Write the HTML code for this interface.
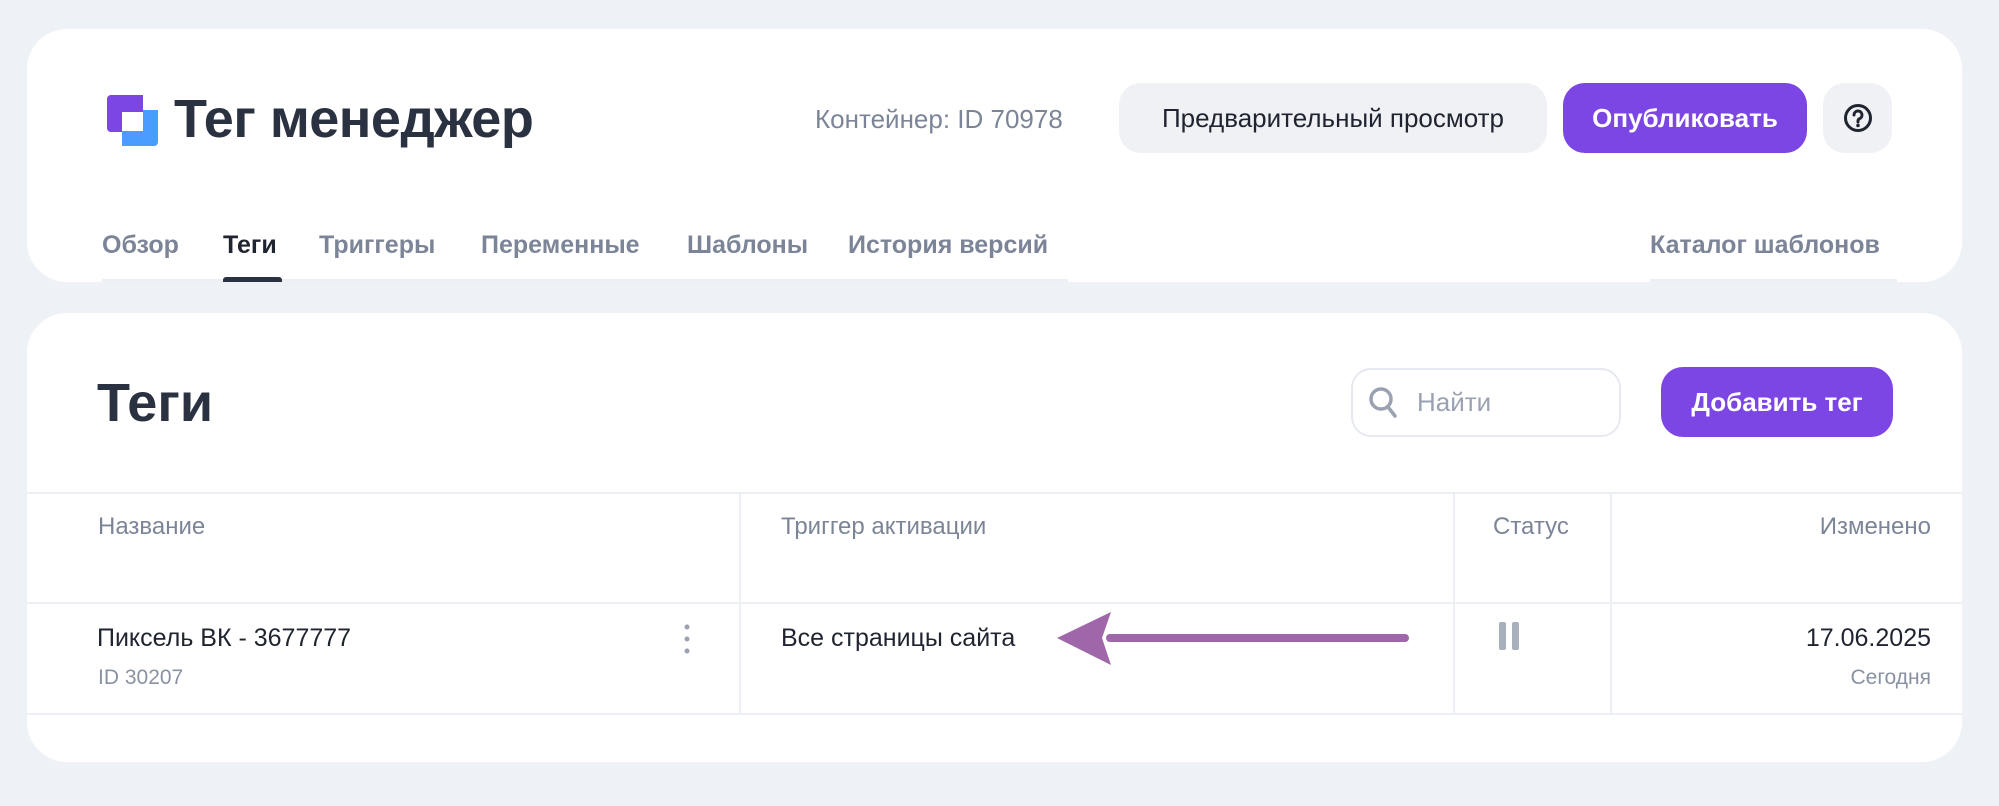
<!DOCTYPE html>
<html><head><meta charset="utf-8"><style>
*{margin:0;padding:0;box-sizing:border-box}
body{width:1999px;height:806px;background:#eef1f6;font-family:"Liberation Sans",sans-serif;position:relative;overflow:hidden;color:#1f2430}
.card{position:absolute;left:27px;width:1935px;background:#fff;border-radius:40px}
.abs{position:absolute;white-space:nowrap}
.btn{position:absolute;border-radius:22px;display:flex;align-items:center;justify-content:center;font-size:26px}
.tab{position:absolute;top:231px;font-size:25px;font-weight:bold;color:#7c8597}
.line{position:absolute;background:#eceff4}
.h{position:absolute;top:513px;font-size:24px;color:#7c8597}
</style></head><body>
<div class="card" style="top:29px;height:253px"></div>
<div class="card" style="top:313px;height:449px"></div>

<svg class="abs" style="left:107px;top:95px" width="52" height="52" viewBox="0 0 52 52">
<path d="M4 0H36V17H15V37H4A4 4 0 0 1 0 33V4A4 4 0 0 1 4 0Z" fill="#7b46e3"/>
<path d="M36 15H51V47A4 4 0 0 1 47 51H15V36H36Z" fill="#4a9cff"/>
</svg>
<div class="abs" style="left:174px;top:88px;font-size:54px;font-weight:bold;color:#2a3140;letter-spacing:-0.5px">Тег менеджер</div>
<div class="abs" style="left:815px;top:104px;font-size:26px;color:#7c8597">Контейнер: ID 70978</div>
<div class="btn" style="left:1119px;top:83px;width:428px;height:70px;background:#f0f1f5;color:#1f2430">Предварительный просмотр</div>
<div class="btn" style="left:1563px;top:83px;width:244px;height:70px;background:#7b46e3;color:#fff;font-weight:bold">Опубликовать</div>
<div class="btn" style="left:1823px;top:83px;width:69px;height:70px;background:#f0f1f5">
<svg width="30" height="30" viewBox="0 0 30 30"><circle cx="15" cy="15" r="12.5" fill="none" stroke="#1f2430" stroke-width="3"/><path d="M11 12a4 4 0 1 1 5.5 3.7c-1 .5-1.5 1.2-1.5 2.3v1" fill="none" stroke="#1f2430" stroke-width="3" stroke-linecap="round"/><circle cx="15" cy="22.5" r="1.8" fill="#1f2430"/></svg></div>

<div class="line" style="left:102px;top:279px;width:966px;height:3px"></div>
<div class="line" style="left:1650px;top:279px;width:247px;height:3px"></div>
<div class="tab" style="left:102px">Обзор</div>
<div class="tab" style="left:223px;color:#1f2430">Теги</div>
<div style="position:absolute;left:223px;top:277px;width:59px;height:5px;background:#2a3140;border-radius:3px 3px 0 0"></div>
<div class="tab" style="left:319px">Триггеры</div>
<div class="tab" style="left:481px">Переменные</div>
<div class="tab" style="left:687px">Шаблоны</div>
<div class="tab" style="left:848px">История версий</div>
<div class="tab" style="left:1650px">Каталог шаблонов</div>

<div class="abs" style="left:97px;top:372px;font-size:54px;font-weight:bold;color:#2a3140">Теги</div>
<div style="position:absolute;left:1351px;top:368px;width:270px;height:69px;border:2px solid #e6e9ef;border-radius:20px"></div>
<svg class="abs" style="left:1368px;top:386px" width="34" height="34" viewBox="0 0 34 34"><circle cx="13" cy="13" r="10" fill="none" stroke="#9aa2b1" stroke-width="3.5"/><path d="M20 21l7 9" stroke="#9aa2b1" stroke-width="3.5" stroke-linecap="round"/></svg>
<div class="abs" style="left:1417px;top:387px;font-size:26px;color:#9aa2b1">Найти</div>
<div class="btn" style="left:1661px;top:367px;width:232px;height:70px;background:#7b46e3;color:#fff;font-weight:bold">Добавить тег</div>

<div class="line" style="left:27px;top:492px;width:1935px;height:2px"></div>
<div class="line" style="left:27px;top:602px;width:1935px;height:2px"></div>
<div class="line" style="left:27px;top:713px;width:1935px;height:2px"></div>
<div class="line" style="left:739px;top:493px;width:2px;height:221px"></div>
<div class="line" style="left:1453px;top:493px;width:2px;height:221px"></div>
<div class="line" style="left:1610px;top:493px;width:2px;height:221px"></div>

<div class="h" style="left:98px">Название</div>
<div class="h" style="left:781px">Триггер активации</div>
<div class="h" style="left:1493px">Статус</div>
<div class="h" style="right:68px">Изменено</div>

<div class="abs" style="left:97px;top:624px;font-size:25px;color:#1f2430">Пиксель ВК - 3677777</div>
<div class="abs" style="left:98px;top:666px;font-size:21px;color:#8a92a2">ID 30207</div>
<svg class="abs" style="left:682px;top:624px" width="10" height="30"><circle cx="5" cy="3" r="2.5" fill="#9aa2b1"/><circle cx="5" cy="15" r="2.5" fill="#9aa2b1"/><circle cx="5" cy="27" r="2.5" fill="#9aa2b1"/></svg>
<div class="abs" style="left:781px;top:624px;font-size:25px;color:#1f2430">Все страницы сайта</div>
<svg class="abs" style="left:1050px;top:608px" width="370" height="62"><path d="M60 30H355" stroke="#a066aa" stroke-width="8" stroke-linecap="round"/><path d="M7 30L61 4L52 30L61 57Z" fill="#a066aa"/></svg>
<div style="position:absolute;left:1499px;top:622px;width:7px;height:28px;background:#a8b0be;border-radius:2px"></div>
<div style="position:absolute;left:1512px;top:622px;width:7px;height:28px;background:#a8b0be;border-radius:2px"></div>
<div class="abs" style="right:68px;top:624px;font-size:25px;color:#1f2430">17.06.2025</div>
<div class="abs" style="right:68px;top:666px;font-size:21px;color:#8a92a2">Сегодня</div>
</body></html>
